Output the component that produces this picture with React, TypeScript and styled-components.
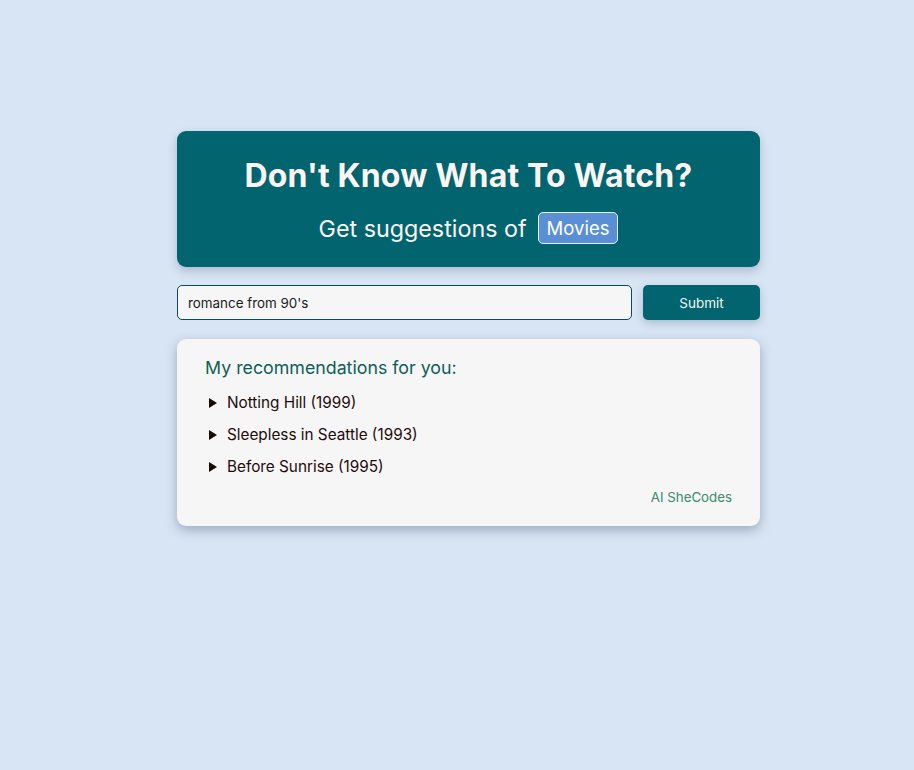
import React from "react";
import styled, { createGlobalStyle } from "styled-components";

const Global = createGlobalStyle`
  html, body { margin: 0; padding: 0; background: #d8e5f4; }
  body { font-family: Inter, "Noto Sans", sans-serif; }
`;

const Page = styled.div`
  min-height: 770px;
  padding: 131px 0 0 23px;
  box-sizing: border-box;
`;

const Container = styled.div`
  width: 583px;
  margin: 0 auto;
  display: flex;
  flex-direction: column;
`;

const Header = styled.header`
  background: #02646f;
  border-radius: 9px;
  height: 136px;
  box-sizing: border-box;
  padding-top: 24px;
  display: flex;
  flex-direction: column;
  align-items: center;
  box-shadow: 0 4px 10px rgba(40, 60, 90, 0.25);
  color: #fbf6f4;
`;

const Title = styled.h1`
  margin: 0;
  font-size: 32px;
  font-weight: 700;
  line-height: 42px;
  letter-spacing: 0.15px;
`;

const Subtitle = styled.div`
  margin-top: 15px;
  display: flex;
  align-items: center;
  gap: 11px;
  font-size: 23.3px;
  line-height: 31px;
`;

const Badge = styled.span`
  background: #5a8fd5;
  border: 1px solid #e8f0fb;
  border-radius: 5px;
  padding: 0 8px;
  font-size: 18.5px;
  line-height: 30px;
  color: #ffffff;
`;

const Form = styled.form`
  margin-top: 18px;
  display: flex;
  gap: 11px;
  height: 35px;
`;

const Input = styled.input`
  flex: 1;
  box-sizing: border-box;
  height: 35px;
  border: 1px solid #0a4a5a;
  border-radius: 5px;
  background: #f6f6f6;
  padding: 0 10px;
  font-family: inherit;
  font-size: 13.4px;
  color: #1a1a1a;
  outline: none;
`;

const Button = styled.button`
  width: 117px;
  height: 35px;
  border: none;
  border-radius: 5px;
  background: #02646f;
  color: #f2f6f6;
  font-family: inherit;
  font-size: 13.5px;
  box-shadow: 0 3px 8px rgba(40, 60, 90, 0.25);
`;

const Results = styled.section`
  margin-top: 19px;
  height: 187px;
  box-sizing: border-box;
  background: #f6f6f6;
  border-radius: 9px;
  padding: 17px 28px 0 28px;
  box-shadow: 0 4px 12px rgba(40, 60, 90, 0.35);
  display: flex;
  flex-direction: column;
`;

const ResultsTitle = styled.h2`
  margin: 0;
  font-size: 17.8px;
  font-weight: 400;
  line-height: 24px;
  color: #0f5e58;
`;

const List = styled.ul`
  list-style: none;
  margin: 11px 0 0;
  padding: 0;
  display: flex;
  flex-direction: column;
  gap: 8px;
`;

const Item = styled.li`
  display: flex;
  align-items: center;
  gap: 10px;
  font-size: 15.3px;
  line-height: 24px;
  color: #1f0c0c;
  padding-left: 4px;
`;

const Arrow = styled.span`
  width: 0;
  height: 0;
  border-top: 5px solid transparent;
  border-bottom: 5px solid transparent;
  border-left: 8px solid #1a0808;
`;

const Credit = styled.div`
  margin-top: 8px;
  align-self: flex-end;
  font-size: 13.3px;
  line-height: 20px;
  color: #3b8a6c;
`;

const movies = ["Notting Hill (1999)", "Sleepless in Seattle (1993)", "Before Sunrise (1995)"];

export default function App() {
  return (
    <>
      <Global />
      <Page>
        <Container>
          <Header>
            <Title>Don't Know What To Watch?</Title>
            <Subtitle>
              <span>Get suggestions of</span>
              <Badge>Movies</Badge>
            </Subtitle>
          </Header>
          <Form onSubmit={(e) => e.preventDefault()}>
            <Input defaultValue="romance from 90's" />
            <Button type="submit">Submit</Button>
          </Form>
          <Results>
            <ResultsTitle>My recommendations for you:</ResultsTitle>
            <List>
              {movies.map((m) => (
                <Item key={m}>
                  <Arrow />
                  <span>{m}</span>
                </Item>
              ))}
            </List>
            <Credit>AI SheCodes</Credit>
          </Results>
        </Container>
      </Page>
    </>
  );
}
